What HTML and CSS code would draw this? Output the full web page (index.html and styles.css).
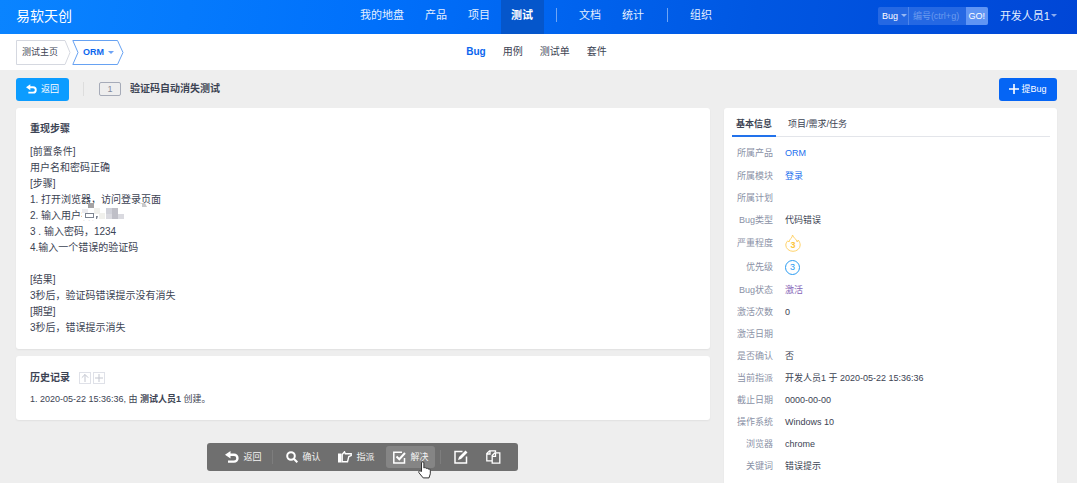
FILE: index.html
```html
<!DOCTYPE html>
<html lang="zh-CN">
<head>
<meta charset="utf-8">
<title>验证码自动消失测试</title>
<link rel="stylesheet" href="styles.css">
</head>
<body>
<header class="header">
  <a class="logo" href="#">易软天创</a>
  <nav class="mainnav">
    <a href="#">我的地盘</a>
    <a href="#">产品</a>
    <a href="#">项目</a>
    <a href="#" class="active">测试</a>
    <span class="rule"></span>
    <a href="#">文档</a>
    <a href="#">统计</a>
    <span class="rule"></span>
    <a href="#">组织</a>
  </nav>
  <div class="header-right">
    <form class="search">
      <span class="search-type">
        <select aria-label="类型"><option>Bug</option></select>
        <i class="caret"></i>
      </span>
      <input type="text" aria-label="编号" placeholder="编号(ctrl+g)">
      <button type="button">GO!</button>
    </form>
    <a class="user" href="#">开发人员1<i class="caret"></i></a>
  </div>
</header>

<div class="subheader">
  <div class="crumbs">
    <a class="crumb" href="#">
      <svg width="55" height="25" viewBox="0 0 55 25"><path d="M.5.5H49L54 12.500 49 24.500H.5z"/></svg>
      <span>测试主页</span>
    </a>
    <a class="crumb current" href="#">
      <svg width="52" height="25" viewBox="0 0 52 25"><path d="M.8.5H45.500L51 12.500 45.500 24.500H.8L6 12.500z"/></svg>
      <span>ORM</span><i class="caret"></i>
    </a>
  </div>
  <nav class="subnav">
    <a href="#" class="active">Bug</a>
    <a href="#">用例</a>
    <a href="#">测试单</a>
    <a href="#">套件</a>
  </nav>
</div>

<div class="titlebar">
  <a class="btn back" href="#">
    <svg width="11" height="10" viewBox="0 0 14 12"><path d="M5.500 0v2.500H9a4.600 4.600 0 0 1 0 9.300H3V9.400h6a2.200 2.200 0 0 0 0-4.500H5.500v2.600L0 3.700z"/></svg>返回
  </a>
  <span class="rule"></span>
  <span class="bug-id">1</span>
  <h1>验证码自动消失测试</h1>
  <a class="btn create" href="#">
    <svg width="10" height="10" viewBox="0 0 10 10"><path d="M4.200 0h1.600v4.200H10v1.600H5.800V10H4.200V5.800H0V4.200h4.200z"/></svg>提Bug
  </a>
</div>

<div class="layout">
  <main class="main">
    <section class="card steps">
      <h2>重现步骤</h2>
      <p>[前置条件]</p>
      <p>用户名和密码正确</p>
      <p>[步骤]</p>
      <p>1. 打开浏览器，访问登录页面</p>
      <p class="masked">2. 输入用户名，
        <svg class="mask" width="76" height="19" viewBox="0 0 76 19">
          <path fill="#fff" d="M3 3h64v3H3zM0 6h56v3H0zM1 9h46v9H1z"/>
          <path fill="#a3a2a4" d="M7 1h6v5H7z"/>
          <path fill="#ecebee" d="M1 7h6v4H1z"/>
          <path fill="#7d8490" d="M4 11h9v1H4zM4 11h1v5H4zM12 11h1v5h-1zM4 15h9v1H4zM15 14h2l-1 3h-1z"/>
          <path fill="#f0f0ec" d="M13 6h6v6H13zM18 11h6v6H18z"/>
          <path fill="#d0d1d9" d="M25 6h12v6H25z"/>
          <path fill="#bfbfc7" d="M31 6h6v11H31z"/>
          <path fill="#dadae0" d="M25 12h6v5H25zM37 12h6v5H37z"/>
          <path fill="#c9cacc" d="M61 1h3l2 4H61z"/>
        </svg>
      </p>
      <p>3 . 输入密码，1234</p>
      <p>4.输入一个错误的验证码</p>
      <p>&nbsp;</p>
      <p>[结果]</p>
      <p>3秒后，验证码错误提示没有消失</p>
      <p>[期望]</p>
      <p>3秒后，错误提示消失</p>
    </section>

    <section class="card history">
      <div class="history-head">
        <h2>历史记录</h2>
        <button type="button" aria-label="排序"><svg width="10" height="10" viewBox="0 0 10 10"><path d="M5 9V1.500M1.800 4.700 5 1.500l3.200 3.200"/></svg></button>
        <button type="button" aria-label="展开"><svg width="10" height="10" viewBox="0 0 10 10"><path d="M5 1v8M1 5h8"/></svg></button>
      </div>
      <p>1. 2020-05-22 15:36:36, 由 <b>测试人员1</b> 创建。</p>
    </section>

    <div class="actions">
      <button type="button">
        <svg width="14" height="12" viewBox="0 0 14 12"><path fill="#fff" d="M5.500 0v2.500H9a4.600 4.600 0 0 1 0 9.300H3V9.400h6a2.200 2.200 0 0 0 0-4.500H5.500v2.600L0 3.700z"/></svg>返回
      </button>
      <span class="rule"></span>
      <button type="button">
        <svg width="12" height="12" viewBox="0 0 12 12"><g fill="none" stroke="#fff" stroke-width="2"><circle cx="5" cy="5" r="3.800"/><path d="M7.800 7.800 11.300 11.300"/></g></svg>确认
      </button>
      <button type="button">
        <svg width="14" height="12" viewBox="0 0 14 12"><path fill="#fff" d="M0 2.500h3.500v9H0z"/><path fill="none" stroke="#fff" stroke-width="1.400" d="M4.200 3.500 6.500.8 7.300 2.800H13.200V4.600L10.800 5.500 9.500 10.800H4.200z"/></svg>指派
      </button>
      <button type="button" class="active">
        <svg width="13" height="13" viewBox="0 0 13 13"><g fill="none" stroke="#fff"><path stroke-width="1.500" d="M11.500 7v5H.8V1.300H9"/><path stroke-width="2" d="M3.500 5.500 6.300 8.200 12 2"/></g></svg>解决
        <svg class="cursor" width="13" height="18" viewBox="0 0 13 18"><path fill="#fff" stroke="#333" d="M3.500 10.500V2a1.200 1.200 0 0 1 2.400 0V7c1-.8 2-.4 2.200.4 1-.5 1.900 0 2 .7 1.200-.4 2.200.2 2.200 1.500v3.200L11 16.900H5.200L1 11.800c-1-1.400.6-2.500 1.500-1.700z"/></svg>
      </button>
      <span class="rule narrow"></span>
      <button type="button" aria-label="编辑">
        <svg width="14" height="14" viewBox="0 0 14 14"><path fill="none" stroke="#fff" stroke-width="1.500" d="M8.500 1.500H1v11.500h11.500V6.500"/><path fill="#fff" d="M11.500.5 13.500 2.500 7 9l-3 1 1-3z"/></svg>
      </button>
      <button type="button" aria-label="复制">
        <svg width="15" height="14" viewBox="0 0 15 14"><g fill="none" stroke="#fff" stroke-width="1.300"><path d="M6 10.800H.8V3.500L3.500.8H9.500V2.500M.8 4H4V.8"/><path d="M6.200 5.500 8.800 2.900H13.800V13.200H6.200zM6.200 6.300H9.500V3"/></g></svg>
      </button>
    </div>
  </main>

  <aside class="card side">
    <div class="tabs" role="tablist">
      <button type="button" role="tab" aria-selected="true" class="active">基本信息</button>
      <button type="button" role="tab" aria-selected="false">项目/需求/任务</button>
    </div>
    <table class="info">
      <tr class="tall"><th>所属产品</th><td><a href="#">ORM</a></td></tr>
      <tr class="tall"><th>所属模块</th><td><a href="#">登录</a></td></tr>
      <tr><th>所属计划</th><td></td></tr>
      <tr><th>Bug类型</th><td>代码错误</td></tr>
      <tr class="icon-row"><th>严重程度</th><td><span class="severity"><svg width="16" height="18" viewBox="0 0 16 18"><path d="M7.500 1C7.500 4 4.300 5 4 8L2.800 6.800C1.500 8.300.8 9.500.8 11A7.200 6.300 0 0 0 15.200 11C15.200 9 14.200 7.300 13.200 6L12.200 8C11.500 5 8.500 4 7.500 1z"/></svg><b>3</b></span></td></tr>
      <tr class="icon-row"><th>优先级</th><td><span class="priority">3</span></td></tr>
      <tr><th>Bug状态</th><td class="status">激活</td></tr>
      <tr><th>激活次数</th><td>0</td></tr>
      <tr><th>激活日期</th><td></td></tr>
      <tr><th>是否确认</th><td>否</td></tr>
      <tr><th>当前指派</th><td>开发人员1 于 2020-05-22 15:36:36</td></tr>
      <tr><th>截止日期</th><td>0000-00-00</td></tr>
      <tr><th>操作系统</th><td>Windows 10</td></tr>
      <tr><th>浏览器</th><td>chrome</td></tr>
      <tr><th>关键词</th><td>错误提示</td></tr>
    </table>
  </aside>
</div>
</body>
</html>
```
FILE: styles.css
```css
* { box-sizing: border-box; }

body {
  margin: 0;
  height: 100vh;
  overflow: hidden;
  display: flex;
  flex-direction: column;
  background: #eee;
  color: #3c4353;
  font: 10px/16px "Liberation Sans", "Noto Sans CJK SC", sans-serif;
}

a { color: inherit; text-decoration: none; }
button, input, select { font: inherit; color: inherit; border: 0; padding: 0; margin: 0; background: none; }
h1, h2, p { margin: 0; font-size: 10px; }
svg { display: block; flex: none; }

.caret {
  display: inline-block;
  flex: none;
  border: 3px solid transparent;
  border-top-color: currentColor;
  border-bottom: 0;
  opacity: .6;
}

/* header */
.header {
  flex: none;
  height: 34px;
  padding: 0 20px 0 16px;
  display: grid;
  grid-template-columns: 1fr auto 1fr;
  align-items: center;
  background: linear-gradient(100deg, #0a84ff, #0070fb 35%, #0057e2 70%, #0046d6);
  color: #e4efff;
  font-size: 11px;
}
.logo { padding-bottom: 2px; font-size: 14px; color: #fff; }
.mainnav { display: flex; align-items: flex-start; }
.mainnav a { height: 34px; padding: 0 11px 0 10px; line-height: 31px; }
.mainnav .active { background: #0556cb; color: #fff; font-weight: bold; }
.mainnav .rule { width: 1px; height: 14px; margin: 8px 12px 0; background: #6ea5f5; }
.header-right { display: flex; justify-content: flex-end; align-items: center; gap: 12px; padding-bottom: 3px; }
.search { display: flex; height: 18px; font-size: 9px; border-radius: 2px; overflow: hidden; background: #2568e3; }
.search-type { display: flex; align-items: center; width: 31px; padding-left: 4px; border-right: 1px solid #4c84ea; }
.search-type select { appearance: none; width: 19px; color: #fff; }
.search input { width: 57px; padding-left: 4px; }
.search input::placeholder { color: #6c9bee; opacity: 1; }
.search button { width: 22px; background: #6095f4; color: #fff; }
.user { display: flex; align-items: center; gap: 1px; }

/* breadcrumbs and module tabs */
.subheader {
  flex: none;
  height: 36px;
  padding: 0 20px 0 16px;
  display: grid;
  grid-template-columns: 1fr auto 1fr;
  align-items: center;
  background: #fff;
}
.crumbs { display: flex; gap: 1px; font-size: 9px; }
.crumb { position: relative; display: flex; align-items: center; height: 25px; width: 55px; padding-left: 6px; }
.crumb svg { position: absolute; left: 0; top: 0; fill: none; stroke: #d5d8e0; }
.crumb.current { width: 52px; padding-left: 11px; gap: 4px; color: #0b66ee; font-weight: bold; }
.crumb.current svg { stroke: #67a2f2; }
.subnav { display: flex; gap: 17px; }
.subnav .active { color: #0b66ee; font-weight: bold; }

/* title bar */
.titlebar { flex: none; display: flex; align-items: center; height: 38px; padding: 0 20px 0 16px; }
.btn { display: flex; align-items: center; justify-content: center; height: 23px; border-radius: 3px; color: #fff; font-size: 9px; }
.btn svg { fill: #fff; }
.back { width: 53px; gap: 4px; background: #0c9cff; }
.create { width: 58px; gap: 2px; margin-left: auto; background: #0565f5; }
.titlebar .rule { width: 1px; height: 14px; margin: 0 15px 0 14px; background: #ddd; }
.bug-id { width: 22px; height: 14px; margin-right: 9px; border: 1px solid #a6abb8; border-radius: 2px; color: #838a9d; font-size: 9px; line-height: 12px; text-align: center; }

/* content */
.layout { flex: 1; display: grid; grid-template-columns: 25fr 12fr; gap: 14px; padding: 0 20px 0 16px; min-height: 0; }
.main { display: flex; flex-direction: column; min-width: 0; }
.card { background: #fff; border-radius: 3px; box-shadow: 0 1px 2px rgba(0, 0, 0, .06); }
.steps { padding: 13px 14px; margin-bottom: 7px; }
.steps h2 { margin-bottom: 7px; }
.masked { position: relative; }
.mask { position: absolute; left: 51px; top: -6px; }
.history { padding: 14px 14px 13px; }
.history-head { display: flex; align-items: center; gap: 2px; margin-bottom: 5px; }
.history-head h2 { margin-right: 7px; }
.history-head button { width: 12px; height: 12px; border: 1px solid #dfe1e8; }
.history-head svg { fill: none; stroke: #c3c6d0; }
.history p { font-size: 9px; }

/* floating action bar */
.actions { align-self: center; display: flex; align-items: center; height: 28px; margin-top: 23px; padding: 0 8px 0 9px; border-radius: 3px; background: #6f6f6f; color: #f4f4f4; font-size: 9px; }
.actions button { display: flex; align-items: center; gap: 4px; height: 22px; padding: 0 8px; margin: 0 1px; border-radius: 3px; }
.actions button.active { position: relative; padding: 0 7px; margin: 0 3px; background: #858585; }
.actions .rule { width: 1px; height: 14px; margin: 0 4px 0 2px; background: #7d7d7d; }
.cursor { position: absolute; left: 32px; top: 15px; }

/* side panel */
.side { min-width: 0; padding: 0 7px 0 8px; border-radius: 3px 3px 0 0; }
.tabs { display: flex; gap: 4px; height: 29px; margin-bottom: 4px; border-bottom: 1px solid #e3e5ea; font-size: 9px; }
.tabs button { height: 29px; padding: 4px 4px 0; margin-right: 4px; border-bottom: 2px solid transparent; }
.tabs .active { border-bottom-color: #2272eb; font-weight: bold; }
.info { width: 100%; border-collapse: collapse; font-size: 9px; line-height: 16px; }
.info tr { height: 22px; }
.info tr.tall { height: 23px; }
.info tr.icon-row { height: 24px; }
.info th { width: 41px; padding: 0; color: #8a91a6; font-weight: normal; text-align: right; white-space: nowrap; }
.info td { padding: 0 0 0 12px; }
.info a { color: #1b6fee; }
.info .status { color: #8666b8; }
.severity { position: relative; display: block; width: 16px; height: 18px; }
.severity path { fill: none; stroke: #ffd36b; stroke-width: 1px; }
.severity b { position: absolute; inset: 3px 0 0; text-align: center; color: #fcc53c; }
.priority { display: block; width: 15px; height: 15px; border: 1px solid #2b9cf2; border-radius: 50%; color: #2b9cf2; line-height: 13px; text-align: center; }
```
